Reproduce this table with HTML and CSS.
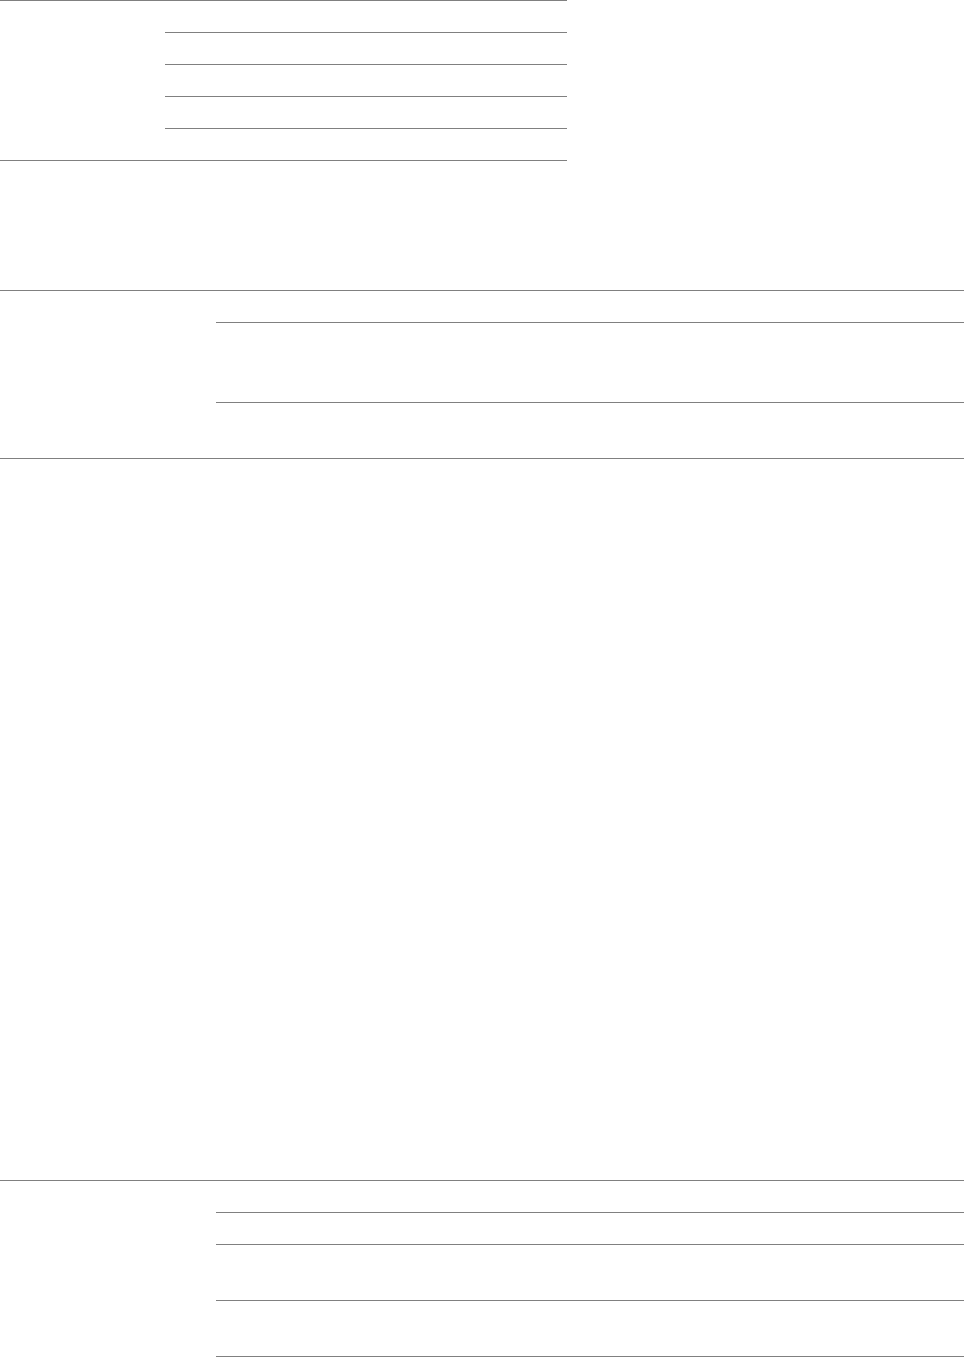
FILE: index.html
```html
<!DOCTYPE html>
<html lang="en">
  <head>
    <meta charset="UTF-8" />
    <meta name="viewport" content="width=device-width, initial-scale=1.0" />
    <link rel="stylesheet" href="styles.css">
    <title>Details</title>
  </head>
  <body>
    <!-- first block: narrow table -->
    <div class="group narrow">
      <div class="label"></div>
      <div class="rows">
        <div class="row"></div>
        <div class="row"></div>
        <div class="row"></div>
        <div class="row"></div>
        <div class="row"></div>
      </div>
    </div>

    <div class="group wide second">
      <div class="label"></div>
      <div class="rows">
        <div class="row"></div>
        <div class="row tall"></div>
        <div class="row mid"></div>
      </div>
    </div>

    <div class="group wide third">
      <div class="label"></div>
      <div class="rows">
        <div class="row"></div>
        <div class="row"></div>
        <div class="row mid"></div>
        <div class="row mid"></div>
        <div class="row"></div>
      </div>
    </div>
  </body>
</html>
```

FILE: styles.css
```css
body {
    margin: 0;
    font-family: "Liberation Sans", Arial, sans-serif;
    font-size: 14px;
    color: #333;
    background: #fff;
}
.group {
    display: flex;
    border-top: 1px solid #808080;
    border-bottom: 1px solid #808080;
}
.narrow {
    width: 567px;
}
.narrow .label {
    width: 165px;
    flex: none;
}
.wide .label {
    width: 216px;
    flex: none;
}
.rows {
    flex: 1;
}
.row {
    height: 31px;
}
.row + .row {
    border-top: 1px solid #808080;
}
.row.tall {
    height: 79px;
}
.row.mid {
    height: 55px;
}
.second {
    margin-top: 129px;
}
.third {
    margin-top: 721px;
}
```
